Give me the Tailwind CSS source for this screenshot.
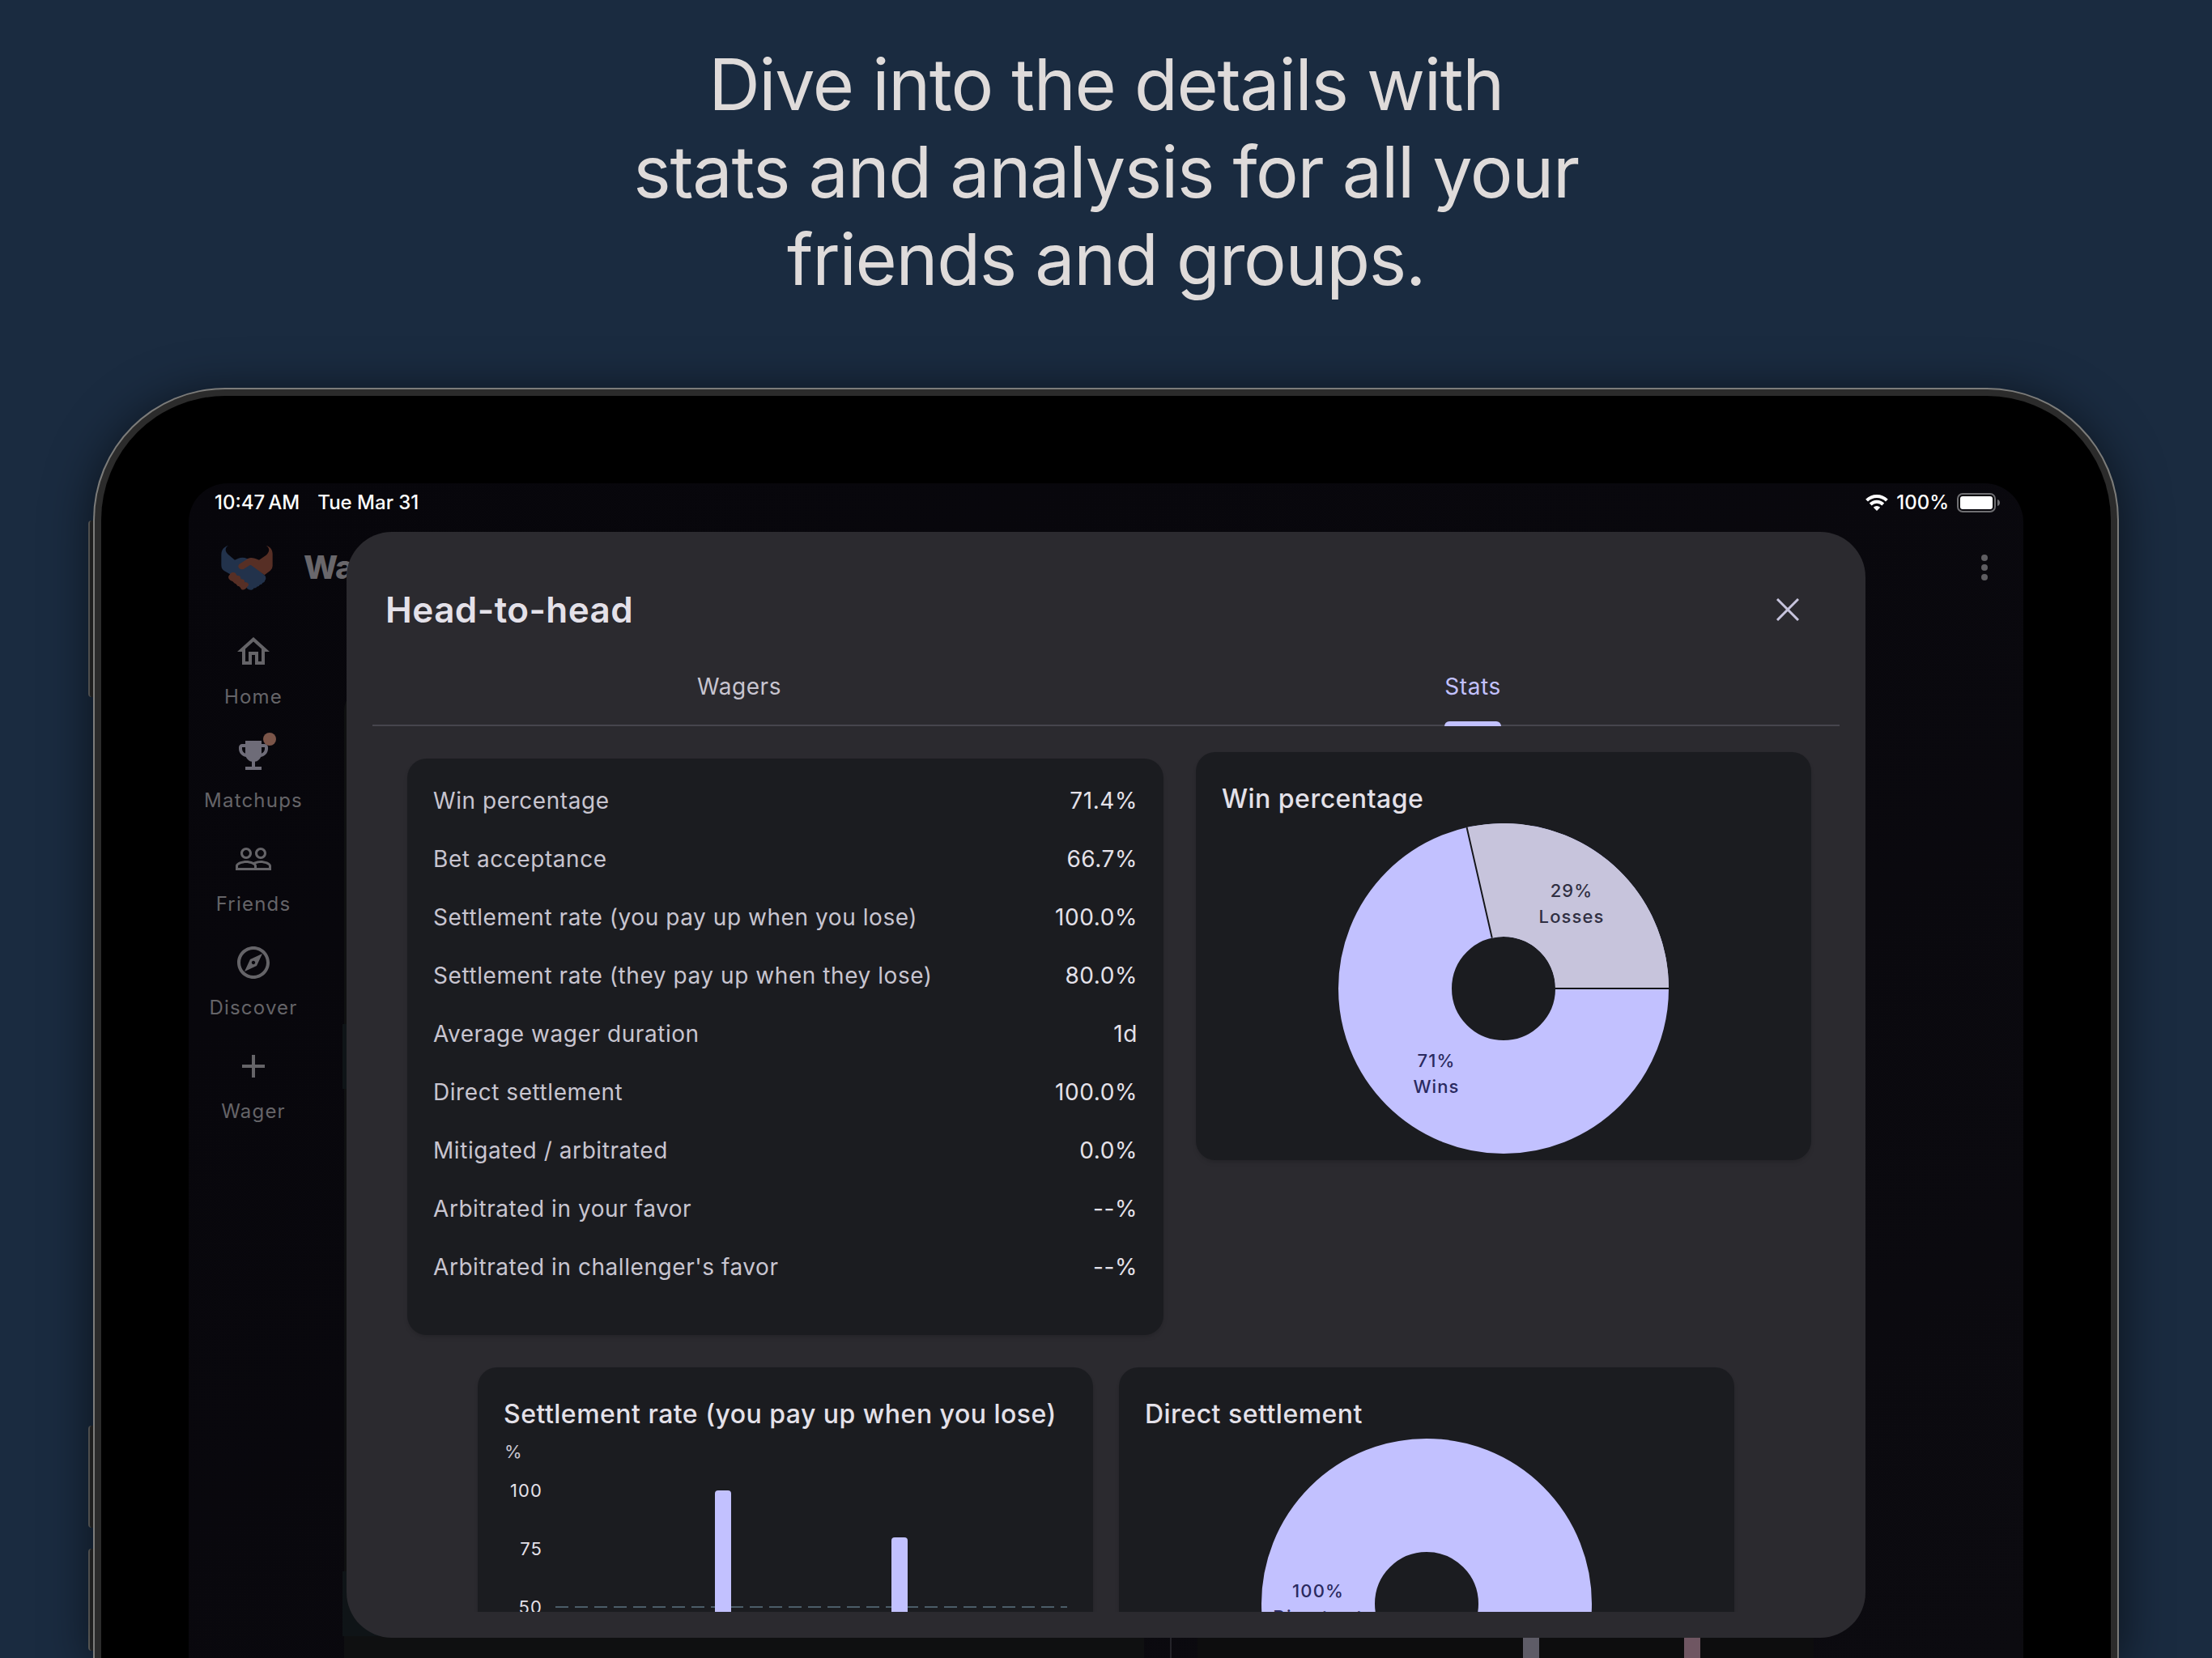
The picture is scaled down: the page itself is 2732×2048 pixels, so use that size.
<!DOCTYPE html>
<html lang="en">

<head>
    <meta charset="UTF-8">
    <meta name="viewport" content="width=device-width, initial-scale=1.0">
    <title>Head-to-head stats</title>

    <!-- Tailwind CSS CDN -->
    <script src="https://cdn.jsdelivr.net/npm/@tailwindcss/browser@4"></script>
</head>

<body class="h-screen overflow-hidden bg-[#1a2b40] font-['Inter',sans-serif] flex flex-col">

    <!-- Headline -->
    <header class="shrink-0 pt-[50px] pb-[105px] text-center">
        <h1 class="text-[88px] leading-[108px] font-normal tracking-[-0.015em] text-[#dfdbda]">
            Dive into the details with<br>
            stats and analysis for all your<br>
            friends and groups.
        </h1>
    </header>

    <!-- Tablet -->
    <div class="relative flex-1 min-h-0 mx-[115px]">
        <!-- Side buttons -->
        <div class="absolute -left-[6px] top-[164px] w-2 h-[218px] rounded-l-sm border-l-2 border-[#6b6b69] bg-[#2b2b2b]"></div>
        <div class="absolute -left-[6px] top-[1282px] w-2 h-[126px] rounded-l-sm border-l-2 border-[#6b6b69] bg-[#2b2b2b]"></div>
        <div class="absolute -left-[6px] top-[1434px] w-2 h-[126px] rounded-l-sm border-l-2 border-[#6b6b69] bg-[#2b2b2b]"></div>

        <div class="relative h-full rounded-t-[163px] bg-[#7c7c7a] pt-[2px] px-[2px] shadow-[0_8px_60px_rgba(0,0,0,0.6)]">
            <div class="h-full rounded-t-[161px] bg-[#2b2b2b] pt-2 px-2">
                <div class="h-full rounded-t-[153px] bg-black pt-[108px] px-[108px]">

                    <!-- Screen -->
                    <div class="relative h-full overflow-hidden rounded-t-[48px] bg-linear-to-br from-[#07060b] to-[#0c0b10] flex flex-col">

                        <!-- Status bar -->
                        <div class="h-12 shrink-0 pl-8 pr-7 flex items-center justify-between text-2xl font-medium text-white">
                            <div class="flex items-center gap-[22px]">
                                <span>10:47&thinsp;AM</span>
                                <span>Tue Mar 31</span>
                            </div>
                            <div class="flex items-center gap-[10px]">
                                <svg class="w-7 h-5" viewBox="0 0 28 20" fill="none" stroke="#fff" stroke-width="4">
                                    <path d="M1.600 7.200a17.500 17.500 0 0 1 24.800 0" />
                                    <path d="M6.200 12a11 11 0 0 1 15.600 0" />
                                    <path d="M14 20l-4.200-4.300a6 6 0 0 1 8.400 0z" fill="#fff" stroke="none" />
                                </svg>
                                <span>100%</span>
                                <svg class="w-[54px] h-6" viewBox="0 0 54 24" fill="none">
                                    <rect x="1" y="1" width="46" height="22" rx="6" stroke="#6f6f72" stroke-width="2" />
                                    <rect x="4" y="4" width="40" height="16" rx="3" fill="#fff" />
                                    <path d="M50 8c4 1 4 7 0 8z" fill="#6f6f72" />
                                </svg>
                            </div>
                        </div>

                        <!-- App bar -->
                        <div class="h-28 shrink-0 pl-10 pr-6 flex items-center justify-between">
                            <div class="flex items-center gap-[38px]">
                                <svg class="w-16 h-14" viewBox="69 250 192 168">
                                    <path fill="#22324b" d="M96 252C80 257 70 268 70 286V326C70 338 76 344 84 348L140 380L166 412Q172 418 182 417Q190 415 191 410Q199 411 202 405Q210 405 213 398Q221 398 223 391Q231 389 232 382Q238 374 232 364L184 322L190 300L165 301Q150 294 133 300L120 306L95 285C84 274 82 262 96 252Z" />
                                    <path fill="#572f25" d="M236 252C250 262 250 275 236 288L210 306Q185 294 170 300L136 322Q130 330 136 337Q144 344 154 339L176 325Q180 324 184 328L230 362L252 345Q260 338 260 328V284C260 268 252 258 236 252Z" />
                                    <path fill="#572f25" d="M97 366L104 356Q112 349 122 354L128 364Q142 362 142 376Q158 378 156 388Q172 388 171 400L160 413Q150 420 144 414Q138 402 130 402Q126 394 118 392Q114 384 104 382Q94 376 97 366Z" />
                                </svg>
                                <span class="text-[40px] leading-[48px] font-extrabold tracking-tight text-[#69676b]">Wagers</span>
                            </div>
                            <button type="button" aria-label="More options">
                                <svg class="w-12 h-12" viewBox="0 0 24 24" fill="#5f5e62">
                                    <circle cx="12" cy="6" r="2" />
                                    <circle cx="12" cy="12" r="2" />
                                    <circle cx="12" cy="18" r="2" />
                                </svg>
                            </button>
                        </div>

                        <div class="flex-1 min-h-0 flex">
                            <!-- Navigation rail -->
                            <nav class="w-40 shrink-0 pt-6 flex flex-col gap-8 text-2xl leading-8 tracking-wider text-[#656468]">
                                <a href="#" class="flex flex-col items-center gap-4">
                                    <svg class="w-12 h-12" viewBox="0 0 24 24" fill="currentColor"><path d="M12 5.690l5 4.500V18h-2v-6H9v6H7v-7.810l5-4.500M12 3L2 12h3v8h6v-6h2v6h6v-8h3L12 3z" /></svg>
                                    <span>Home</span>
                                </a>
                                <a href="#" class="flex flex-col items-center gap-4">
                                    <span class="relative">
                                        <svg class="w-12 h-12 text-[#6e6c78]" viewBox="0 0 24 24" fill="currentColor"><path d="M19 5h-2V3H7v2H5c-1.100 0-2 .9-2 2v1c0 2.550 1.920 4.630 4.390 4.940.63 1.500 1.980 2.630 3.610 2.960V19H7v2h10v-2h-4v-3.100c1.630-.33 2.980-1.460 3.610-2.960C19.080 12.630 21 10.550 21 8V7c0-1.100-.9-2-2-2zM5 8V7h2v3.820C5.840 10.400 5 9.300 5 8zm14 0c0 1.300-.84 2.400-2 2.820V7h2v1z" /></svg>
                                        <span class="absolute -top-1 -right-1 w-4 h-4 rounded-full bg-[#7b5549]"></span>
                                    </span>
                                    <span>Matchups</span>
                                </a>
                                <a href="#" class="flex flex-col items-center gap-4">
                                    <svg class="w-12 h-12" viewBox="0 0 24 24" fill="currentColor"><path d="M16.500 13c-1.200 0-3.070.34-4.500 1-1.430-.67-3.300-1-4.500-1C5.330 13 1 14.080 1 16.250V19h22v-2.750c0-2.170-4.330-3.250-6.500-3.250zm-4 4.500h-10v-1.250c0-.54 2.560-1.750 5-1.750s5 1.210 5 1.750v1.250zm9 0H14v-1.250c0-.46-.2-.86-.52-1.220.88-.3 1.960-.53 3.020-.53 2.440 0 5 1.210 5 1.750v1.250zM7.500 12c1.930 0 3.500-1.570 3.500-3.500S9.430 5 7.500 5 4 6.570 4 8.500 5.570 12 7.500 12zm0-5.500c1.100 0 2 .9 2 2s-.9 2-2 2-2-.9-2-2 .9-2 2-2zm9 5.500c1.930 0 3.500-1.570 3.500-3.500S18.430 5 16.500 5 13 6.570 13 8.500s1.570 3.500 3.500 3.500zm0-5.500c1.100 0 2 .9 2 2s-.9 2-2 2-2-.9-2-2 .9-2 2-2z" /></svg>
                                    <span>Friends</span>
                                </a>
                                <a href="#" class="flex flex-col items-center gap-4">
                                    <svg class="w-12 h-12" viewBox="0 0 24 24" fill="currentColor"><path d="M12 2C6.480 2 2 6.480 2 12s4.480 10 10 10 10-4.480 10-10S17.520 2 12 2zm0 18c-4.410 0-8-3.590-8-8s3.590-8 8-8 8 3.590 8 8-3.590 8-8 8zm-5.500-2.500l7.510-3.490L17.500 6.500 9.990 9.990 6.500 17.500zm5.500-6.600c.61 0 1.100.49 1.100 1.100s-.49 1.100-1.100 1.100-1.100-.49-1.100-1.100.49-1.100 1.100-1.100z" /></svg>
                                    <span>Discover</span>
                                </a>
                                <a href="#" class="flex flex-col items-center gap-4">
                                    <svg class="w-12 h-12" viewBox="0 0 24 24" fill="currentColor"><path d="M19 13h-6v6h-2v-6H5v-2h6V5h2v6h6v2z" /></svg>
                                    <span>Wager</span>
                                </a>
                            </nav>

                            <!-- Page behind the dialog -->
                            <main class="flex-1 pt-24 pl-8 pr-[259px] flex gap-8">
                                <div class="flex-1 bg-[#0f1011] rounded-t-3xl">
                                    <div class="mt-[412px] -mx-[2px] h-20 bg-[#0f1417]"></div>
                                    <div class="mt-[596px] -mx-[2px] h-20 bg-[#0f1417]"></div>
                                </div>
                                <div class="w-[2px] bg-[#242329]"></div>
                                <div class="w-[761px] bg-[#0d0d0e] rounded-t-3xl flex items-end justify-end gap-[179px] pr-[140px]">
                                    <div class="w-5 h-60 bg-[#5e5c67]"></div>
                                    <div class="w-5 h-60 bg-[#6f5662]"></div>
                                </div>
                            </main>
                        </div>

                        <!-- Head-to-head dialog -->
                        <section role="dialog" aria-labelledby="dialog-title"
                            class="absolute inset-x-[195px] top-[60px] bottom-[25px] rounded-[56px] bg-[#2b2a2f] pt-12 pb-8 px-8 flex flex-col">

                            <div class="h-24 shrink-0 px-4 flex items-center justify-between">
                                <h2 id="dialog-title" class="text-[44px] leading-[56px] font-semibold tracking-[0.01em] text-[#e4e1e9]">Head-to-head</h2>
                                <button type="button" aria-label="Close" class="w-24 h-24 flex items-center justify-center">
                                    <svg class="w-7 h-7" viewBox="0 0 28 28" stroke="#c7c4dd" stroke-width="3"><path d="M1 1l26 26M27 1L1 27" /></svg>
                                </button>
                            </div>

                            <!-- Tabs -->
                            <div role="tablist" class="h-24 shrink-0 grid grid-cols-2 border-b-2 border-[#46454d] text-[28px] leading-10 tracking-[0.02em]">
                                <button type="button" role="tab" aria-selected="false" class="text-[#c8c5d0]">Wagers</button>
                                <button type="button" role="tab" aria-selected="true" class="flex justify-center text-[#c2c1ff]">
                                    <span class="relative h-full flex items-center">
                                        Stats
                                        <span class="absolute inset-x-0 -bottom-[2px] h-[6px] rounded-t-md bg-[#c2c1ff]"></span>
                                    </span>
                                </button>
                            </div>

                            <!-- Cards -->
                            <div class="flex-1 min-h-0 overflow-hidden pt-8 flex flex-wrap content-start items-start justify-center gap-8">

                                <div class="w-[934px] m-2 rounded-3xl bg-[#1b1c20] shadow-md pt-4 pb-12 px-8">
                                    <table class="w-full text-[28px] leading-10 tracking-[0.02em]">
                                        <tbody class="text-[#e4e1e9]">
                                            <tr class="h-18">
                                                <th scope="row" class="text-left font-normal text-[#c8c5d0]">Win percentage</th>
                                                <td class="text-right">71.4%</td>
                                            </tr>
                                            <tr class="h-18">
                                                <th scope="row" class="text-left font-normal text-[#c8c5d0]">Bet acceptance</th>
                                                <td class="text-right">66.7%</td>
                                            </tr>
                                            <tr class="h-18">
                                                <th scope="row" class="text-left font-normal text-[#c8c5d0]">Settlement rate (you pay up when you lose)</th>
                                                <td class="text-right">100.0%</td>
                                            </tr>
                                            <tr class="h-18">
                                                <th scope="row" class="text-left font-normal text-[#c8c5d0]">Settlement rate (they pay up when they lose)</th>
                                                <td class="text-right">80.0%</td>
                                            </tr>
                                            <tr class="h-18">
                                                <th scope="row" class="text-left font-normal text-[#c8c5d0]">Average wager duration</th>
                                                <td class="text-right">1d</td>
                                            </tr>
                                            <tr class="h-18">
                                                <th scope="row" class="text-left font-normal text-[#c8c5d0]">Direct settlement</th>
                                                <td class="text-right">100.0%</td>
                                            </tr>
                                            <tr class="h-18">
                                                <th scope="row" class="text-left font-normal text-[#c8c5d0]">Mitigated / arbitrated</th>
                                                <td class="text-right">0.0%</td>
                                            </tr>
                                            <tr class="h-18">
                                                <th scope="row" class="text-left font-normal text-[#c8c5d0]">Arbitrated in your favor</th>
                                                <td class="text-right">--%</td>
                                            </tr>
                                            <tr class="h-18">
                                                <th scope="row" class="text-left font-normal text-[#c8c5d0]">Arbitrated in challenger's favor</th>
                                                <td class="text-right">--%</td>
                                            </tr>
                                        </tbody>
                                    </table>
                                </div>

                                <div class="w-[760px] rounded-3xl bg-[#1b1c20] shadow-md pt-[34px] px-8 pb-2">
                                    <h3 class="text-[32px] leading-[48px] font-medium tracking-[0.015em] text-[#e4e1e9]">Win percentage</h3>
                                    <svg class="block mx-auto mt-[6px] w-[408px] h-[408px]" viewBox="-204 -204 408 408">
                                        <circle r="134" fill="none" stroke="#c2c1ff" stroke-width="140" />
                                        <path d="M134 0A134 134 0 0 0 -29.800 -130.600" fill="none" stroke="#c7c4dc" stroke-width="140" />
                                        <path d="M64 0H204M-14.200 -62.400L-45.400 -198.900" stroke="#141519" stroke-width="2" />
                                        <g class="text-[22px] font-medium tracking-wider" text-anchor="middle">
                                            <text x="84" y="-113" fill="#302f42">29%</text>
                                            <text x="84" y="-81" fill="#302f42">Losses</text>
                                            <text x="-83" y="97" fill="#2a2a60">71%</text>
                                            <text x="-83" y="129" fill="#2a2a60">Wins</text>
                                        </g>
                                    </svg>
                                </div>

                                <div class="w-[760px] rounded-3xl bg-[#1b1c20] shadow-md pt-[34px] px-8 pb-2">
                                    <h3 class="text-[32px] leading-[48px] font-medium tracking-[0.015em] text-[#e4e1e9]">Settlement rate (you pay up when you lose)</h3>
                                    <svg class="block mt-[6px] w-full h-[408px]" viewBox="0 0 696 408">
                                        <g class="text-[22px] tracking-wider">
                                            <text x="1" y="24" fill="#c8c5d0">%</text>
                                            <g fill="#e4e1e9" text-anchor="end">
                                                <text x="48" y="72">100</text>
                                                <text x="48" y="144">75</text>
                                                <text x="48" y="216">50</text>
                                            </g>
                                        </g>
                                        <path d="M64 208H696" stroke="#4b5c68" stroke-width="2" stroke-dasharray="16 8" />
                                        <rect x="261" y="64" width="20" height="288" rx="4" fill="#c2c1ff" />
                                        <rect x="479" y="122" width="20" height="230" rx="4" fill="#c2c1ff" />
                                    </svg>
                                </div>

                                <div class="w-[760px] rounded-3xl bg-[#1b1c20] shadow-md pt-[34px] px-8 pb-2">
                                    <h3 class="text-[32px] leading-[48px] font-medium tracking-[0.015em] text-[#e4e1e9]">Direct settlement</h3>
                                    <svg class="block mx-auto mt-[6px] w-[408px] h-[408px]" viewBox="-204 -204 408 408">
                                        <circle r="134" fill="none" stroke="#c2c1ff" stroke-width="140" />
                                        <g class="text-[22px] font-medium tracking-wider" text-anchor="middle" fill="#2a2a60">
                                            <text x="-134" y="-8">100%</text>
                                            <text x="-134" y="24">Direct set</text>
                                        </g>
                                    </svg>
                                </div>

                            </div>
                        </section>

                    </div>
                </div>
            </div>
        </div>
    </div>

</body>

</html>
